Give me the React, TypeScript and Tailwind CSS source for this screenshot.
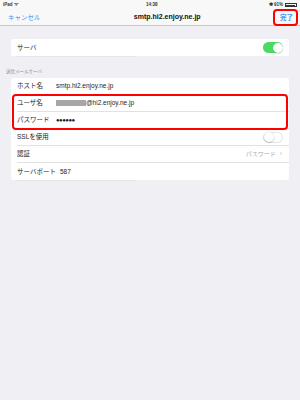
import React from "react";

const font = { fontFamily: '"Liberation Sans", "Noto Sans CJK JP", sans-serif' };

function Toggle({ on }: { on: boolean }) {
  return (
    <div
      className={
        on
          ? "relative w-[20px] h-[11px] rounded-full bg-[#4cd964]"
          : "relative w-[20px] h-[11px] rounded-full bg-white border border-[#e3e3e6]"
      }
    >
      <div
        className={
          on
            ? "absolute top-[0.5px] right-[0.5px] w-[10px] h-[10px] rounded-full bg-white shadow-[0_0.5px_1px_rgba(0,0,0,0.3)]"
            : "absolute top-[-0.5px] left-[-0.5px] w-[10px] h-[10px] rounded-full bg-white shadow-[0_0.5px_1.5px_rgba(0,0,0,0.35)]"
        }
      />
    </div>
  );
}

function Row({ last, children }: { last?: boolean; children: React.ReactNode }) {
  return (
    <div className="pl-[6px]">
      <div
        className={
          last
            ? "h-[17px] flex items-center pr-[6px]"
            : "h-[17px] flex items-center pr-[6px] border-b border-[#e2e2e4]"
        }
      >
        {children}
      </div>
    </div>
  );
}

export default function App() {
  return (
    <div className="w-[300px] h-[400px] bg-[#efeff4] overflow-hidden text-[#1c1c1c]" style={font}>
      {/* Status + nav bar */}
      <div className="bg-[#f8f8f8] border-b border-[#c8c7cc] h-[26px] relative">
        <div className="h-[10px] flex items-center justify-between px-[3px] text-[4.5px] font-bold text-[#333]">
          <span>iPad ᯤ</span>
          <span className="ml-[16px]">14:38</span>
          <span className="flex items-center gap-[2px]">
            <span>✱ 91%</span>
            <span className="w-[12px] h-[4px] border-[0.5px] border-[#333] p-[0.5px] flex">
              <span className="bg-[#333] w-full h-full" />
            </span>
          </span>
        </div>
        <div className="h-[15px] flex items-center justify-between px-[8px]">
          <span className="text-[6.5px] text-[#3d8ef5]">キャンセル</span>
          <span className="text-[7px] font-bold text-[#111] ml-[14px]">smtp.hi2.enjoy.ne.jp</span>
          <span className="relative text-[6.5px] font-bold text-[#3d8ef5] mr-[-1px]">
            完了
            <span className="absolute left-[-7px] right-[-5px] top-[-4px] bottom-[-4px] border-2 border-[#ff0000] rounded-[4px]" />
          </span>
        </div>
      </div>

      {/* Server switch */}
      <div className="mt-[13px] mx-[11px] bg-white rounded-[2px]">
        <Row last>
          <span className="text-[6.5px] flex-1">サーバ</span>
          <Toggle on />
        </Row>
      </div>
      <div className="ml-[17px] w-[119px] h-px bg-[#e6e6ea]" />

      <div className="h-[21px] flex items-end pb-[2px] pl-[6px]">
        <span className="text-[4.5px] text-[#8e8e93]">送信メールサーバ</span>
      </div>

      {/* Outgoing server group */}
      <div className="mx-[11px] bg-white rounded-[2px]">
        <Row>
          <span className="text-[6.5px] w-[39px]">ホスト名</span>
          <span className="text-[6.5px]">smtp.hi2.enjoy.ne.jp</span>
        </Row>
        <div className="relative">
          <Row>
            <span className="text-[6.5px] w-[39px]">ユーザ名</span>
            <span className="w-[30px] h-[6px] bg-[#a6a6a6]" />
            <span className="text-[6.5px]">@hi2.enjoy.ne.jp</span>
          </Row>
          <Row>
            <span className="text-[6.5px] w-[39px]">パスワード</span>
            <span className="text-[6px] tracking-[-0.5px]">●●●●●●</span>
          </Row>
          <div className="absolute left-[1px] right-[1px] top-[-1px] bottom-[-1px] border-2 border-[#ff0000] rounded-[4px]" />
        </div>
        <Row>
          <span className="text-[6.5px] flex-1">SSLを使用</span>
          <Toggle on={false} />
        </Row>
        <Row>
          <span className="text-[6.5px] flex-1">認証</span>
          <span className="text-[6px] text-[#a8a8ad]">パスワード</span>
          <span className="text-[7px] text-[#c4c4c8] ml-[4px] mr-[1px]">›</span>
        </Row>
        <Row last>
          <span className="text-[6.5px] w-[43px]">サーバポート</span>
          <span className="text-[6.5px]">587</span>
        </Row>
      </div>
      <div className="ml-[17px] w-[119px] h-px bg-[#e6e6ea]" />
    </div>
  );
}
